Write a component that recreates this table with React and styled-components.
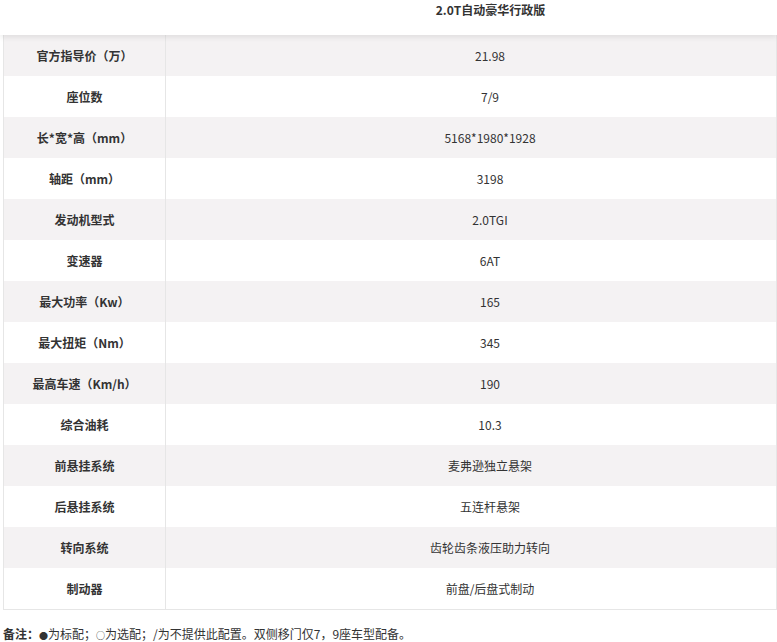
import React from "react";
import styled, { createGlobalStyle } from "styled-components";

const GlobalStyle = createGlobalStyle`
  html, body {
    margin: 0;
    padding: 0;
    background: #fff;
  }
  body {
    font-family: "Microsoft YaHei", "Noto Sans CJK SC", "Noto Sans", sans-serif;
    font-size: 12px;
    color: #333;
  }
`;

const specs = [
  ["官方指导价（万）", "21.98"],
  ["座位数", "7/9"],
  ["长*宽*高（mm）", "5168*1980*1928"],
  ["轴距（mm）", "3198"],
  ["发动机型式", "2.0TGI"],
  ["变速器", "6AT"],
  ["最大功率（Kw）", "165"],
  ["最大扭矩（Nm）", "345"],
  ["最高车速（Km/h）", "190"],
  ["综合油耗", "10.3"],
  ["前悬挂系统", "麦弗逊独立悬架"],
  ["后悬挂系统", "五连杆悬架"],
  ["转向系统", "齿轮齿条液压助力转向"],
  ["制动器", "前盘/后盘式制动"],
];

const Page = styled.div`
  display: flex;
  flex-direction: column;
  width: 777px;
`;

const Header = styled.div`
  position: relative;
  z-index: 1;
  display: grid;
  grid-template-columns: 166px 1fr;
  height: 35px;
  background: #fff;
  box-shadow: 0 2px 6px rgba(0, 0, 0, 0.09);
`;

const HeaderTitle = styled.div`
  grid-column: 2;
  padding: 2px 0 0 38px;
  text-align: center;
  font-weight: bold;
  font-size: 12px;
  line-height: 16px;
  color: #333;
`;

const Table = styled.div`
  margin-left: 3px;
  width: 772px;
  border: 1px solid #e6e6e6;
  border-top: none;
`;

const Row = styled.div`
  display: grid;
  grid-template-columns: 162px 1fr;
  height: 41px;
  background: ${(p) => (p.$shaded ? "#f4f2f3" : "#fff")};
`;

const Label = styled.div`
  display: flex;
  align-items: center;
  justify-content: center;
  border-right: 1px solid #e6e6e6;
  font-weight: bold;
  color: #333;
`;

const Value = styled.div`
  display: flex;
  align-items: center;
  justify-content: center;
  padding-left: 38px;
  color: #333;
`;

const Note = styled.div`
  margin: 15px 0 0 3px;
  line-height: 18px;
  font-size: 12px;
  color: #333;
  white-space: nowrap;
`;

const NoteTitle = styled.b`
  font-weight: bold;
`;

const Dot = styled.span`
  font-size: 9px;
`;

export default function App() {
  return (
    <Page>
      <GlobalStyle />
      <Header>
        <HeaderTitle>2.0T自动豪华行政版</HeaderTitle>
      </Header>
      <Table>
        {specs.map(([label, value], i) => (
          <Row key={label} $shaded={i % 2 === 0}>
            <Label>{label}</Label>
            <Value>{value}</Value>
          </Row>
        ))}
      </Table>
      <Note>
        <NoteTitle>备注：</NoteTitle>
        <Dot>●</Dot>为标配；<Dot>○</Dot>为选配；/为不提供此配置。双侧移门仅7，9座车型配备。
      </Note>
    </Page>
  );
}
